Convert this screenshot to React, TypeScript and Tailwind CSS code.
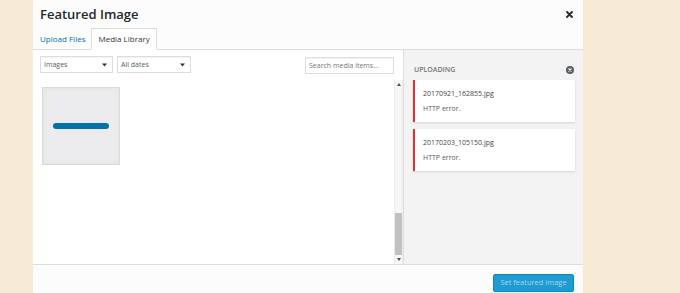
const font = { fontFamily: '"Open Sans", "Noto Sans", sans-serif' };

type Upload = { name: string; error: string };

const uploads: Upload[] = [
  { name: "20170921_162855.jpg", error: "HTTP error." },
  { name: "20170203_105150.jpg", error: "HTTP error." },
];

const Caret = () => (
  <svg width="5" height="4" viewBox="0 0 5 4" className="shrink-0">
    <path d="M0 0.5h5L2.5 3.5z" fill="#32373c" />
  </svg>
);

const FilterSelect = ({ label, width }: { label: string; width: string }) => (
  <div
    className={`flex h-[17px] items-center justify-between border border-[#dddddd] bg-white pl-[3px] pr-[5px] shadow-[inset_0_1px_1px_rgba(0,0,0,0.05)] ${width}`}
  >
    <span className="text-[7px] leading-[10px] text-[#555d66]">{label}</span>
    <Caret />
  </div>
);

const UploadError = ({ name, error }: Upload) => (
  <div className="border-l-2 border-[#dc3232] bg-white pb-[8px] pl-[8px] pt-[9px] shadow-[0_1px_2px_rgba(0,0,0,0.13)]">
    <div className="text-[7px] leading-[10px] text-[#444444]">{name}</div>
    <div className="mt-[5px] text-[7px] leading-[10px] text-[#555d66]">{error}</div>
  </div>
);

const App = () => {
  return (
    <div className="flex h-[293px] w-[680px] bg-[#f7ebd6]" style={font}>
      <div className="ml-[33px] flex h-full w-[550px] flex-col bg-white">
        {/* header + tabs */}
        <div className="bg-[#fcfcfc]">
          <div className="flex h-[28px] items-start justify-between pl-[7px] pr-[10px]">
            <h1 className="pt-[6px] text-[13px] font-semibold leading-[16px] text-[#23282d]">
              Featured Image
            </h1>
            <svg width="7" height="7" viewBox="0 0 7 7" className="mt-[11px]">
              <path d="M1 1l5 5M6 1L1 6" stroke="#23282d" strokeWidth="1.8" strokeLinecap="round" />
            </svg>
          </div>
          <div className="flex h-[22px] border-b border-[#dddddd]">
            <div className="flex h-[21px] items-center pl-[7px] pr-[6px] text-[8px] text-[#0073aa]">
              Upload Files
            </div>
            <div className="flex h-[22px] items-center border border-[#dddddd] border-b-white bg-white px-[6px] text-[8px] text-[#32373c]">
              Media Library
            </div>
          </div>
        </div>

        {/* body */}
        <div className="flex min-h-0 flex-1">
          <div className="flex w-[370px] flex-col">
            <div className="flex h-[30px] items-start justify-between pl-[7px] pr-[9px] pt-[6px]">
              <div className="flex gap-[4px]">
                <FilterSelect label="Images" width="w-[73px]" />
                <FilterSelect label="All dates" width="w-[74px]" />
              </div>
              <div className="mt-px flex h-[17px] w-[89px] items-center border border-[#dddddd] bg-white pl-[3px] shadow-[inset_0_1px_1px_rgba(0,0,0,0.05)]">
                <span className="text-[7px] leading-[10px] text-[#72777c]">Search media items...</span>
              </div>
            </div>
            <div className="flex min-h-0 flex-1">
              <div className="flex-1 pl-[9px] pt-[7px]">
                <div className="flex h-[78px] w-[78px] items-center justify-center border border-[#dadada] bg-[#ececee] shadow-[inset_0_0_6px_rgba(0,0,0,0.04)]">
                  <div className="h-[6px] w-[56px] rounded-full bg-[#0073aa]" />
                </div>
              </div>
              {/* scrollbar */}
              <div className="flex w-[9px] flex-col border-x border-[#ececec] bg-[#f6f6f6]">
                <div className="flex h-[9px] items-center justify-center">
                  <svg width="4" height="3" viewBox="0 0 4 3">
                    <path d="M0 3h4L2 0z" fill="#505050" />
                  </svg>
                </div>
                <div className="flex flex-1 flex-col justify-end">
                  <div className="h-[42px] bg-[#c1c1c1]" />
                </div>
                <div className="flex h-[9px] items-center justify-center">
                  <svg width="4" height="3" viewBox="0 0 4 3">
                    <path d="M0 0h4L2 3z" fill="#505050" />
                  </svg>
                </div>
              </div>
            </div>
          </div>

          {/* uploading sidebar */}
          <aside className="flex w-[180px] flex-col border-l border-[#dddddd] bg-[#f3f3f3] pt-[15px]">
            <div className="flex h-[10px] items-center justify-between pl-[10px] pr-[9px]">
              <span className="text-[7px] font-semibold uppercase leading-[10px] text-[#72777c]">
                Uploading
              </span>
              <svg width="8" height="8" viewBox="0 0 8 8">
                <circle cx="4" cy="4" r="4" fill="#555d66" />
                <path d="M2.5 2.5l3 3M5.5 2.5l-3 3" stroke="#f3f3f3" strokeWidth="1.1" />
              </svg>
            </div>
            <div className="ml-[9px] mr-[8px] mt-[5px] flex flex-col gap-[7px]">
              {uploads.map((u, i) => (
                <UploadError key={i} {...u} />
              ))}
            </div>
          </aside>
        </div>

        {/* footer */}
        <div className="flex h-[29px] justify-end border-t border-[#dddddd] bg-[#fcfcfc] pr-[9px] pt-[9px]">
          <button className="flex h-[18px] w-[81px] items-center justify-center rounded-[2px] border border-[#0b8ac0] bg-[#1f9bd1] text-[7.5px] text-[#a6d8ef]">
            Set featured image
          </button>
        </div>
      </div>
    </div>
  );
};

export default App;
